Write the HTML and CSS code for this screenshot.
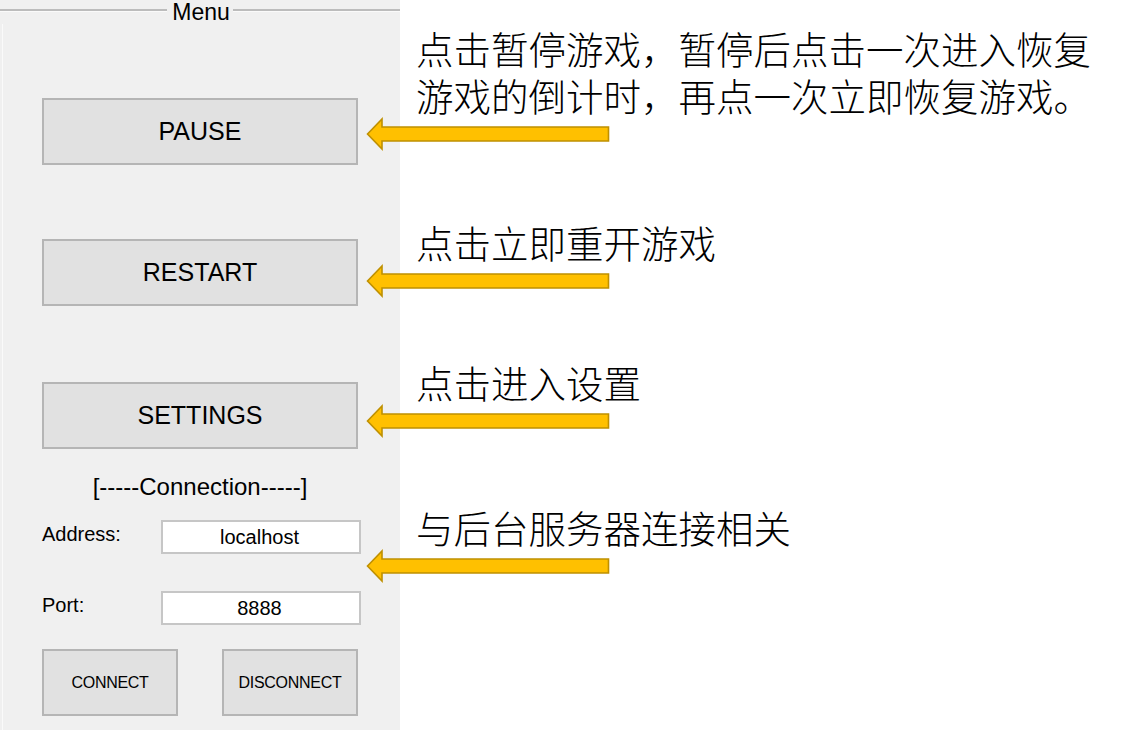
FILE: index.html
```html
<!DOCTYPE html>
<html lang="zh-CN">
<head>
<meta charset="utf-8">
<title>Menu</title>
<link rel="stylesheet" href="styles.css">
</head>
<body>
<div class="page">
  <section class="panel">
    <div class="legend-row">
      <span class="legend-line"></span>
      <span class="legend-text">Menu</span>
      <span class="legend-line"></span>
    </div>
    <div class="group-body">
      <div class="main-buttons">
        <button class="btn btn-big">PAUSE</button>
        <button class="btn btn-big">RESTART</button>
        <button class="btn btn-big btn-settings">SETTINGS</button>
      </div>
      <div class="conn-title">[-----Connection-----]</div>
      <div class="field-row">
        <label class="field-label">Address:</label>
        <div class="field-input">localhost</div>
      </div>
      <div class="field-row field-row-port">
        <label class="field-label">Port:</label>
        <div class="field-input">8888</div>
      </div>
      <div class="conn-buttons">
        <button class="btn btn-small">CONNECT</button>
        <button class="btn btn-small">DISCONNECT</button>
      </div>
    </div>
  </section>
  <section class="notes">
    <div class="note note-pause">
      <p class="note-text"><span class="note-line">点击暂停游戏，暂停后点击一次进入恢复</span><span class="note-line">游戏的倒计时，再点一次立即恢复游戏。</span></p>
      <svg class="arrow" width="244" height="34" viewBox="0 0 244 34"><path d="M1.5 17 L16 2 L16 10 L242.5 10 L242.5 24 L16 24 L16 32 Z"/></svg>
    </div>
    <div class="note note-restart">
      <p class="note-text"><span class="note-line">点击立即重开游戏</span></p>
      <svg class="arrow" width="244" height="34" viewBox="0 0 244 34"><path d="M1.5 17 L16 2 L16 10 L242.5 10 L242.5 24 L16 24 L16 32 Z"/></svg>
    </div>
    <div class="note note-settings">
      <p class="note-text"><span class="note-line">点击进入设置</span></p>
      <svg class="arrow" width="244" height="34" viewBox="0 0 244 34"><path d="M1.5 17 L16 2 L16 10 L242.5 10 L242.5 24 L16 24 L16 32 Z"/></svg>
    </div>
    <div class="note note-server">
      <p class="note-text"><span class="note-line">与后台服务器连接相关</span></p>
      <svg class="arrow" width="244" height="34" viewBox="0 0 244 34"><path d="M1.5 17 L16 2 L16 10 L242.5 10 L242.5 24 L16 24 L16 32 Z"/></svg>
    </div>
  </section>
</div>
</body>
</html>
```

FILE: styles.css
```css
html, body {
  margin: 0;
  padding: 0;
  background: #ffffff;
}

body {
  font-family: "Liberation Sans", Arial, sans-serif;
  color: #000;
}

.page {
  display: flex;
  width: 1140px;
  height: 730px;
  overflow: hidden;
}

/* ---------- left panel ---------- */
.panel {
  flex: 0 0 400px;
  width: 400px;
  height: 730px;
  background: #f0f0f0;
  display: flex;
  flex-direction: column;
}

.legend-row {
  display: flex;
  height: 24px;
}

.legend-line {
  flex: 1;
  align-self: flex-start;
  margin-top: 9px;
  height: 2px;
  background: #bcbcbc;
  border-bottom: 1px solid #fafafa;
}

.legend-text {
  font-size: 23px;
  line-height: 24px;
  padding: 0 3px 0 5px;
}

.group-body {
  flex: 1;
  margin-left: 2px;
  border-left: 1px solid #fafafa;
  padding-left: 39px;
  display: flex;
  flex-direction: column;
}

.main-buttons {
  margin-top: 74px;
  display: flex;
  flex-direction: column;
  gap: 74px;
}

.btn {
  font-family: "Liberation Sans", Arial, sans-serif;
  background: #e1e1e1;
  border: 2px solid #b5b5b5;
  color: #000;
  padding: 0;
  margin: 0;
  cursor: pointer;
}

.btn-big {
  width: 316px;
  height: 67px;
  font-size: 25px;
}

.btn-settings {
  margin-top: 2px;
}

.conn-title {
  width: 316px;
  margin-top: 23px;
  font-size: 24px;
  line-height: 30px;
  text-align: center;
}

.field-row {
  display: flex;
  align-items: flex-start;
  margin-top: 18px;
}

.field-row-port {
  margin-top: 37px;
}

.field-label {
  width: 119px;
  font-size: 20px;
  line-height: 28px;
}

.field-input {
  box-sizing: border-box;
  width: 200px;
  height: 34px;
  background: #fff;
  border: 2px solid #c6c6c6;
  font-size: 20px;
  line-height: 30px;
  text-align: center;
  padding-right: 3px;
}

.conn-buttons {
  width: 316px;
  margin-top: 24px;
  display: flex;
  justify-content: space-between;
}

.btn-small {
  width: 136px;
  height: 67px;
  font-size: 16px;
  letter-spacing: -0.3px;
}

/* ---------- annotations ---------- */
.notes {
  padding-left: 16px;
  padding-top: 23px;
  display: flex;
  flex-direction: column;
}

.note-text {
  margin: 0;
  font-family: "Liberation Sans", "Noto Sans CJK SC", sans-serif;
  font-weight: 300;
  font-size: 37.5px;
  color: #000;
  white-space: nowrap;
  display: flex;
  flex-direction: column;
}

.note-line {
  display: block;
  height: 47px;
  line-height: 57px;
}

.arrow {
  display: block;
  margin-left: -50px;
}

.arrow path {
  fill: #ffc000;
  stroke: #bf9000;
  stroke-width: 1.6;
  stroke-linejoin: miter;
}

.note-restart {
  margin-top: 66px;
}

.note-settings {
  margin-top: 59px;
}

.note-server {
  margin-top: 64px;
}
```
